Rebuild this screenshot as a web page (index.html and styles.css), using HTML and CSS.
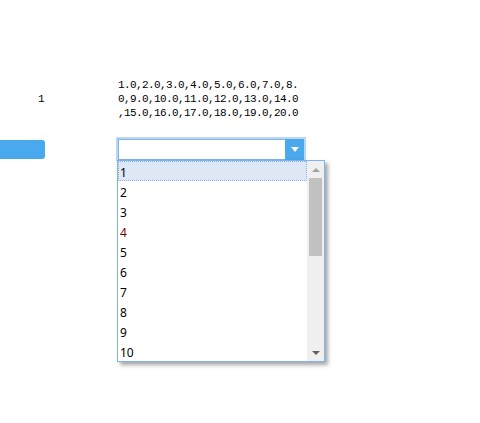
FILE: index.html
```html
<!DOCTYPE html>
<html>
<head>
<meta charset="utf-8">
<link rel="stylesheet" href="styles.css">
</head>
<body>
<div class="page">
  <div class="row-top">
    <div class="cell-index">1</div>
    <div class="cell-values">1.0,2.0,3.0,4.0,5.0,6.0,7.0,8.0,9.0,10.0,11.0,12.0,13.0,14.0,15.0,16.0,17.0,18.0,19.0,20.0</div>
  </div>
  <div class="row-controls">
    <div class="blue-btn"></div>
    <div class="combo">
      <div class="combo-inner">
        <div class="combo-input"></div>
        <div class="combo-btn"><span class="tri-white"></span></div>
      </div>
      <div class="dropdown">
        <ul class="items">
          <li class="item selected">1</li>
          <li class="item">2</li>
          <li class="item">3</li>
          <li class="item red">4</li>
          <li class="item">5</li>
          <li class="item">6</li>
          <li class="item">7</li>
          <li class="item">8</li>
          <li class="item">9</li>
          <li class="item">10</li>
        </ul>
        <div class="scrollbar">
          <div class="sb-arrow"><span class="tri-up"></span></div>
          <div class="sb-track"><div class="sb-thumb"></div></div>
          <div class="sb-arrow"><span class="tri-down"></span></div>
        </div>
      </div>
    </div>
  </div>
</div>
</body>
</html>
```
FILE: styles.css
```css
html, body {
  margin: 0;
  padding: 0;
  background: #ffffff;
}
body {
  min-height: 423px;
}
.page {
  padding-top: 78px;
  min-height: 345px;
  font-family: "Liberation Mono", monospace;
  color: #000;
}
.row-top {
  display: flex;
  align-items: center;
}
.cell-index {
  width: 82px;
  text-align: center;
  font-size: 11px;
  line-height: 14px;
  letter-spacing: -0.6px;
}
.cell-values {
  margin-left: 36px;
  width: 183px;
  font-size: 11px;
  line-height: 14px;
  letter-spacing: -0.6px;
  word-break: break-all;
  line-break: anywhere;
  overflow-wrap: anywhere;
}
.row-controls {
  display: flex;
  align-items: flex-start;
  margin-top: 17px;
}
.blue-btn {
  width: 45px;
  height: 19px;
  margin-top: 3px;
  background: #4aa8ec;
  border-radius: 0 3px 3px 0;
}
.combo {
  position: relative;
  margin-left: 71px;
  width: 190px;
  height: 24px;
  box-sizing: border-box;
  border: 2px solid #b9d7f0;
  border-bottom-width: 1px;
}
.combo-inner {
  display: flex;
  height: 21px;
  box-sizing: border-box;
  border: 1px solid #7fb4e8;
  border-right: none;
}
.combo-input {
  flex: 1;
  background: #fff;
}
.combo-btn {
  width: 19px;
  margin-top: -1px;
  margin-bottom: -1px;
  background: #4aa8ec;
  display: flex;
  align-items: center;
  justify-content: center;
}
.tri-white {
  width: 0;
  height: 0;
  border-left: 4px solid transparent;
  border-right: 4px solid transparent;
  border-top: 5px solid #ffffff;
}
.dropdown {
  position: absolute;
  top: 100%;
  left: -1px;
  width: 208px;
  height: 202px;
  box-sizing: border-box;
  border: 1px solid #7fb4e8;
  background: #fff;
  box-shadow: 3px 3px 4px rgba(0, 0, 0, 0.35);
  display: flex;
  z-index: 2;
}
.items {
  list-style: none;
  margin: 0;
  padding: 0;
  flex: 1;
  font-family: "Noto Sans", "Open Sans", sans-serif;
  font-size: 12px;
}
.item {
  height: 20px;
  padding-top: 4px;
  line-height: 16px;
  padding-left: 2px;
  box-sizing: border-box;
  color: #000;
}
.item.selected {
  background: #dde7f6;
  border: 1px dotted #8fb3e6;
  padding-top: 3px;
  line-height: 15px;
  padding-left: 1px;
}
.item.red {
  color: #7a0000;
}
.scrollbar {
  width: 17px;
  background: #f0f0f0;
  display: flex;
  flex-direction: column;
}
.sb-arrow {
  height: 17px;
  display: flex;
  align-items: center;
  justify-content: center;
}
.sb-track {
  flex: 1;
}
.sb-thumb {
  margin: 0 2px;
  height: 78px;
  background: #c1c1c1;
}
.tri-up {
  width: 0;
  height: 0;
  border-left: 4px solid transparent;
  border-right: 4px solid transparent;
  border-bottom: 4px solid #a3a3a3;
}
.tri-down {
  width: 0;
  height: 0;
  border-left: 4px solid transparent;
  border-right: 4px solid transparent;
  border-top: 4px solid #606060;
}
```
